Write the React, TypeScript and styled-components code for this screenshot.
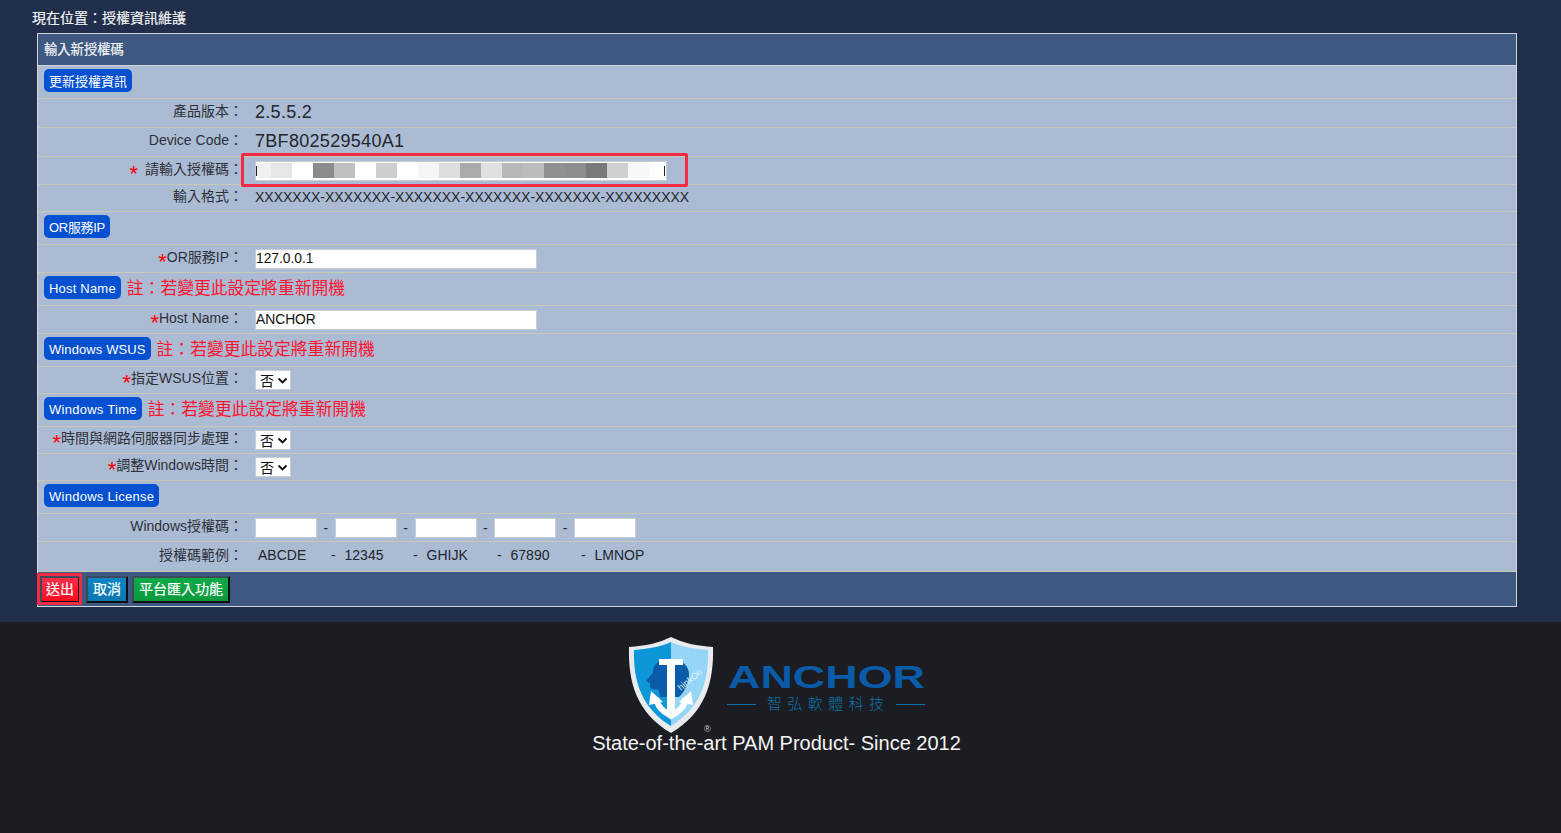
import React from "react";
import styled, { createGlobalStyle } from "styled-components";

const Global = createGlobalStyle`
  html, body { margin: 0; padding: 0; height: 100%; background: #1c1d22; }
  body { font-family: "Liberation Sans", "Noto Sans CJK TC", sans-serif; overflow: hidden; }
  * { box-sizing: border-box; }
`;

const Page = styled.div`
  width: 1561px; height: 833px; display: flex; flex-direction: column; background: #1c1d22;
`;
const Top = styled.main`
  height: 622px; background: #212f4d; padding: 9px 44px 0 37px; display: flex; flex-direction: column;
`;
const Crumb = styled.div`
  height: 24px; margin-left: -5px; font-size: 14px; line-height: 18px; color: #f2f2f2;
  -webkit-text-stroke: 0.2px #f2f2f2;
`;
const Panel = styled.section`
  width: 1480px; height: 574px; border: 1px solid #d3d6d8; background: #abbbd4; display: flex; flex-direction: column;
`;
const Head = styled.header`
  height: 32px; flex: none; background: #3f5a82; color: #f4f4f4; font-size: 13.3px; padding: 0 0 3px 6px;
  display: flex; align-items: center; border-bottom: 1px solid #d3d6d8; -webkit-text-stroke: 0.2px #f4f4f4;
`;
const SectionRow = styled.div<{ $h: number }>`
  height: ${p => p.$h}px; flex: none; display: flex; align-items: center; gap: 6px; padding: 0 0 3px 6px;
  border-bottom: 1px solid #c9c9b8;
`;
const Tag = styled.span<{ $ls?: number }>`
  height: 23px; padding: 2px 5px 0; display: inline-flex; align-items: center; border-radius: 5px;
  background: #0650d2; color: #fff; font-size: 13px; line-height: 1; letter-spacing: ${p => p.$ls ?? 0}px;
`;
const Note = styled.span`
  color: #ff1430; font-size: 16.8px; margin-top: -2px;
`;
const Row = styled.div<{ $h: number }>`
  height: ${p => p.$h}px; flex: none; display: grid; grid-template-columns: 205px 1fr; column-gap: 12px; align-items: center;
  border-bottom: 1px solid #c9c9b8;
`;
const Label = styled.label`
  text-align: right; color: #2e3138; font-size: 14px; line-height: 20px; padding-bottom: 4px; white-space: nowrap;
`;
const Star = styled.span<{ $gap?: number }>`
  display: inline-block; color: #f00; font-size: 22px; line-height: 0; vertical-align: -7px; margin-right: ${p => p.$gap ?? 0}px;
`;
const Big = styled.span`
  color: #23262c; font-size: 18px; line-height: 20px; padding-bottom: 2px; letter-spacing: 0.3px;
`;
const Format = styled.span`
  color: #23262c; font-size: 14px; line-height: 20px; padding-bottom: 2px;
`;
const TextInput = styled.input<{ $w: number }>`
  width: ${p => p.$w}px; height: 20px; border: 1px solid #c8cdd4; background: #fff; padding: 0;
  font: 13.8px "Liberation Sans", sans-serif; color: #111; outline: none; display: block; flex: none;
`;
const Value = styled.div`
  display: flex; align-items: center; min-width: 0;
`;
const SelectBox = styled.div`
  width: 36px; height: 20px; background: #fff; border: 1px solid #c8cdd4; display: flex; align-items: center;
  padding-left: 4px; gap: 3px; font-size: 14px; color: #111;
  svg { display: block; }
`;
const Dash = styled.span`
  width: 17.75px; flex: none; text-align: center; color: #23262c; font-size: 14px;
`;
const Example = styled.span<{ $w: number; $ml?: number }>`
  width: ${p => p.$w}px; margin-left: ${p => p.$ml ?? 0}px; color: #23262c; font-size: 14px; line-height: 20px;
  padding-bottom: 4px; flex: none; word-spacing: 5px; white-space: nowrap;
`;
const KeyWrap = styled.div`
  position: relative; width: 412px; height: 20px;
`;
const KeyBlocks = styled.div`
  position: absolute; left: 2px; right: 3px; top: 2px; bottom: 3px; display: flex; overflow: hidden; pointer-events: none;
`;
const Block = styled.i<{ $c: string }>`
  width: 21px; flex: none; height: 100%; background: ${p => p.$c};
  &:first-child { width: 14px; }
`;
const KeyMark = styled.i<{ $right?: boolean }>`
  position: absolute; top: 5px; width: 1px; height: 10px; background: #222;
  ${p => (p.$right ? "right: 2px;" : "left: 1px;")}
`;
const Redbox = styled.div`
  position: absolute; left: -14px; top: -8px; width: 447px; height: 34px; border: 3px solid #f02c44; border-radius: 2px; pointer-events: none;
`;
const Foot = styled.footer`
  flex: 1; background: #3f5a82; display: flex; align-items: center; gap: 4px; padding: 1px 0 0 2px;
`;
const Btn = styled.button<{ $bg: string; $end: string; $w: number; $mr?: number }>`
  position: relative; width: ${p => p.$w}px; height: 27px; padding: 0 0 3px; margin-right: ${p => p.$mr ?? 0}px;
  font: 14px "Liberation Sans", "Noto Sans CJK TC", sans-serif; color: #fff; -webkit-text-stroke: 0.2px #fff;
  background: linear-gradient(${p => p.$bg}, ${p => p.$end});
  border: 2px solid #0c0e12; border-top-color: #3d4a5c; border-left-color: #3d4a5c;
`;
const BtnHalo = styled.span`
  position: absolute; left: -5px; top: -5px; right: -4px; bottom: -4px; border: 3px solid #f02c44; pointer-events: none;
`;
const Bottom = styled.footer`
  flex: 1; display: flex; flex-direction: column; align-items: center; padding-top: 13px;
`;
const Logo = styled.svg`
  display: block; margin-left: 7px; overflow: visible;
`;
const Slogan = styled.div`
  color: #f4f4f4; font-size: 20px; line-height: 22px; margin-top: -1px; margin-left: -8px;
`;

const Select = () => (
  <SelectBox>
    否
    <svg width="11" height="7" viewBox="0 0 11 7"><path d="M1.5 1.5 5.5 5.5 9.5 1.5" fill="none" stroke="#111" strokeWidth="1.9" /></svg>
  </SelectBox>
);

const blocks = ["#f0f0f0","#e6e6e6","#fff","#8b8b8b","#c0c0c0","#fff","#cdcdcd","#fff","#f5f5f5","#dedede","#aaa","#e0e0e0","#b8b8b8","#bcbcbc","#909090","#8d8d8d","#7a7a7a","#d0d0d0","#f8f8f8","#fdfdfd"];

const AnchorLogo = () => (
  <Logo width="310" height="98" viewBox="0 0 310 98" aria-label="ANCHOR logo">
    <path d="M42 2 C54 8 68 11 84 12 C85 48 76 78 42 98 C8 78 -1 48 0 12 C16 11 30 8 42 2Z" fill="#e9ecef" />
    <path d="M42 7 V91 C14 74 4 48 5 15 C18 14 31 12 42 7Z" fill="#0d97d8" />
    <path d="M42 7 C53 12 66 14 79 15 C80 48 70 74 42 91Z" fill="#95d5f6" />
    <path d="M34 25 C26 27 24 32 24 38 L17 46 L21 48 L21 52 C23 55 27 54 30 55 L31 62 L50 62 C54 59 59 50 60 41 C61 29 50 22 34 25Z" fill="#0a5ba8" />
    <path d="M30 24 H54 V30 H46 V77 H38 V30 H30Z" fill="#fff" />
    <path d="M27 63 C29 74 36 77 42 81 C48 77 55 74 57 63" fill="none" stroke="#fff" strokeWidth="6" />
    <path d="M22 56 L20 70 L34 67Z" fill="#fff" />
    <path d="M62 56 L64 70 L50 67Z" fill="#fff" />
    <text x="0" y="0" transform="translate(52 56) rotate(-40)" fill="#e4f4fd" fontSize="9" fontFamily="Liberation Sans">hinkOn</text>
    <text x="75" y="97" fill="#c9c9c9" fontSize="9" fontFamily="Liberation Sans">®</text>
    <text x="99" y="53" fill="#0a5ba8" fontSize="31" fontWeight="700" fontFamily="Liberation Sans" textLength="197" lengthAdjust="spacingAndGlyphs">ANCHOR</text>
    <rect x="98" y="69" width="29" height="1" fill="#0a74a8" />
    <rect x="267" y="69" width="29" height="1" fill="#0a74a8" />
    <text x="138" y="74" fill="#0a74a8" fontSize="15" fontWeight="300" fontFamily="Noto Sans CJK TC" letterSpacing="5.4">智弘軟體科技</text>
  </Logo>
);

export default function App() {
  return (
    <Page>
      <Global />
      <Top>
        <Crumb>現在位置：授權資訊維護</Crumb>
        <Panel>
          <Head>輸入新授權碼</Head>
          <SectionRow $h={33}><Tag>更新授權資訊</Tag></SectionRow>
          <Row $h={29}><Label>產品版本：</Label><Value><Big>2.5.5.2</Big></Value></Row>
          <Row $h={29}><Label>Device Code：</Label><Value><Big>7BF802529540A1</Big></Value></Row>
          <Row $h={28}>
            <Label><Star $gap={7}>*</Star>請輸入授權碼：</Label>
            <Value>
              <KeyWrap>
                <TextInput $w={412} readOnly value="" />
                <KeyMark />
                <KeyBlocks>{blocks.map((c, i) => <Block key={i} $c={c} />)}</KeyBlocks>
                <KeyMark $right />
                <Redbox />
              </KeyWrap>
            </Value>
          </Row>
          <Row $h={27}><Label>輸入格式：</Label><Value><Format>XXXXXXX-XXXXXXX-XXXXXXX-XXXXXXX-XXXXXXX-XXXXXXXXX</Format></Value></Row>
          <SectionRow $h={33}><Tag $ls={-0.3}>OR服務IP</Tag></SectionRow>
          <Row $h={28}><Label><Star>*</Star>OR服務IP：</Label><Value><TextInput $w={282} readOnly value="127.0.0.1" /></Value></Row>
          <SectionRow $h={33}><Tag $ls={0.2}>Host Name</Tag><Note>註：若變更此設定將重新開機</Note></SectionRow>
          <Row $h={28}><Label><Star>*</Star>Host Name：</Label><Value><TextInput $w={282} readOnly value="ANCHOR" /></Value></Row>
          <SectionRow $h={33}><Tag $ls={0.1}>Windows WSUS</Tag><Note>註：若變更此設定將重新開機</Note></SectionRow>
          <Row $h={27}><Label><Star>*</Star>指定WSUS位置：</Label><Value><Select /></Value></Row>
          <SectionRow $h={33}><Tag $ls={0.27}>Windows Time</Tag><Note>註：若變更此設定將重新開機</Note></SectionRow>
          <Row $h={27}><Label><Star>*</Star>時間與網路伺服器同步處理：</Label><Value><Select /></Value></Row>
          <Row $h={27}><Label><Star>*</Star>調整Windows時間：</Label><Value><Select /></Value></Row>
          <SectionRow $h={33}><Tag $ls={0.27}>Windows License</Tag></SectionRow>
          <Row $h={28}>
            <Label>Windows授權碼：</Label>
            <Value>
              <TextInput $w={62} readOnly value="" /><Dash>-</Dash>
              <TextInput $w={62} readOnly value="" /><Dash>-</Dash>
              <TextInput $w={62} readOnly value="" /><Dash>-</Dash>
              <TextInput $w={62} readOnly value="" /><Dash>-</Dash>
              <TextInput $w={62} readOnly value="" />
            </Value>
          </Row>
          <Row $h={30}>
            <Label>授權碼範例：</Label>
            <Value>
              <Example $w={73} $ml={3}>ABCDE</Example>
              <Example $w={82}>- 12345</Example>
              <Example $w={84}>- GHIJK</Example>
              <Example $w={84}>- 67890</Example>
              <Example $w={80}>- LMNOP</Example>
            </Value>
          </Row>
          <Foot>
            <Btn $w={40} $mr={2} $bg="#f5304c" $end="#ff0a1e">送出<BtnHalo /></Btn>
            <Btn $w={42} $bg="#0a86c6" $end="#0b78b0">取消</Btn>
            <Btn $w={98} $bg="#0bab46" $end="#0a9a3e">平台匯入功能</Btn>
          </Foot>
        </Panel>
      </Top>
      <Bottom>
        <AnchorLogo />
        <Slogan>State-of-the-art PAM Product- Since 2012</Slogan>
      </Bottom>
    </Page>
  );
}
